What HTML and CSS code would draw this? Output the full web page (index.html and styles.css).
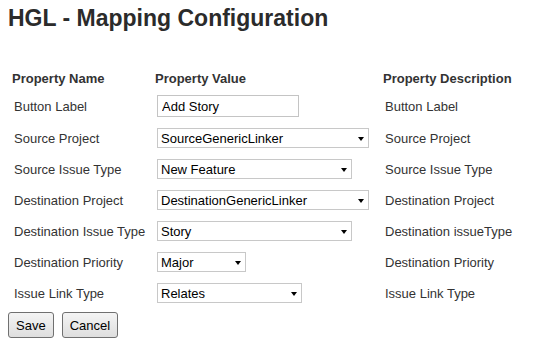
FILE: index.html
```html
<!DOCTYPE html>
<html>
<head>
<meta charset="utf-8">
<title>HGL - Mapping Configuration</title>
<link rel="stylesheet" href="styles.css">
</head>
<body>
<div class="page">
  <h1 class="title">HGL - Mapping Configuration</h1>
  <table class="config">
    <thead>
      <tr>
        <th class="c1">Property Name</th>
        <th class="c2">Property Value</th>
        <th class="c3">Property Description</th>
      </tr>
    </thead>
    <tbody>
      <tr>
        <td class="c1">Button Label</td>
        <td class="c2"><input class="text" type="text" value="Add Story"></td>
        <td class="c3">Button Label</td>
      </tr>
      <tr>
        <td class="c1">Source Project</td>
        <td class="c2"><span class="sel"><select class="w-xl"><option>SourceGenericLinker</option></select></span></td>
        <td class="c3">Source Project</td>
      </tr>
      <tr>
        <td class="c1">Source Issue Type</td>
        <td class="c2"><span class="sel"><select class="w-lg"><option>New Feature</option></select></span></td>
        <td class="c3">Source Issue Type</td>
      </tr>
      <tr>
        <td class="c1">Destination Project</td>
        <td class="c2"><span class="sel"><select class="w-xl"><option>DestinationGenericLinker</option></select></span></td>
        <td class="c3">Destination Project</td>
      </tr>
      <tr>
        <td class="c1">Destination Issue Type</td>
        <td class="c2"><span class="sel"><select class="w-lg"><option>Story</option></select></span></td>
        <td class="c3">Destination issueType</td>
      </tr>
      <tr>
        <td class="c1">Destination Priority</td>
        <td class="c2"><span class="sel"><select class="w-sm"><option>Major</option></select></span></td>
        <td class="c3">Destination Priority</td>
      </tr>
      <tr>
        <td class="c1">Issue Link Type</td>
        <td class="c2"><span class="sel"><select class="w-md"><option>Relates</option></select></span></td>
        <td class="c3">Issue Link Type</td>
      </tr>
    </tbody>
  </table>
  <div class="actions">
    <button class="btn" type="button">Save</button>
    <button class="btn" type="button">Cancel</button>
  </div>
</div>
</body>
</html>
```

FILE: styles.css
```css
html, body {
  margin: 0;
  padding: 0;
  background: #ffffff;
}

body {
  font-family: "Liberation Sans", Arial, sans-serif;
  font-size: 13px;
  color: #333333;
}

.page {
  padding: 5px 8px 0 8px;
}

.title {
  margin: 0 0 36px 0;
  font-size: 23px;
  line-height: 26px;
  font-weight: bold;
  color: #2b2b2b;
}

.config {
  border-collapse: collapse;
  border-spacing: 0;
  table-layout: fixed;
  width: 529px;
}

.config th {
  text-align: left;
  font-weight: bold;
  font-size: 13px;
  line-height: 15px;
  padding: 4px 0 4px 4px;
  color: #333333;
  white-space: nowrap;
}

.config td {
  padding: 5px 0 6px 6px;
  line-height: 15px;
  vertical-align: baseline;
  white-space: nowrap;
}

.config th.c1 { width: 139px; padding-left: 4px; }
.config th.c2 { width: 224px; }
.config td.c1 { padding-left: 6px; }

.text {
  box-sizing: border-box;
  width: 142px;
  height: 22px;
  margin: 0;
  padding: 0 4px;
  border: 1px solid #c4c4c4;
  font-family: "Liberation Sans", Arial, sans-serif;
  font-size: 13px;
  color: #000000;
  background: #ffffff;
  outline: none;
}

.sel {
  position: relative;
  display: inline-block;
}

.sel select {
  box-sizing: border-box;
  height: 20px;
  margin: 0;
  padding: 0 18px 0 3px;
  border: 1px solid #c8c8c8;
  border-radius: 0;
  background: #ffffff;
  font-family: "Liberation Sans", Arial, sans-serif;
  font-size: 13px;
  color: #000000;
  -webkit-appearance: none;
  appearance: none;
  outline: none;
}

.sel::after {
  content: "";
  position: absolute;
  right: 5px;
  top: 9px;
  width: 0;
  height: 0;
  border-left: 3.5px solid transparent;
  border-right: 3.5px solid transparent;
  border-top: 4px solid #000000;
  pointer-events: none;
}

.w-xl { width: 212px; }
.w-lg { width: 195px; }
.w-md { width: 145px; }
.w-sm { width: 89px; }

.actions {
  display: flex;
  gap: 8px;
  margin-top: 3px;
}

.btn {
  box-sizing: border-box;
  height: 26px;
  margin: 0;
  padding: 0 7px;
  border: 1px solid #707070;
  border-radius: 3px;
  background: linear-gradient(#f4f4f4, #dedede);
  font-family: "Liberation Sans", Arial, sans-serif;
  font-size: 13px;
  color: #000000;
}
```
